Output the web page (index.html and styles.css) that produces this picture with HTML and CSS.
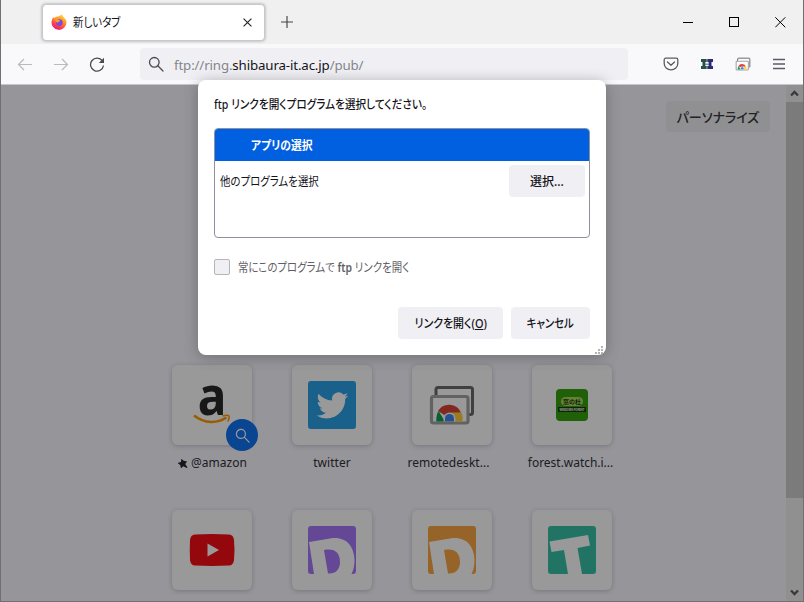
FILE: index.html
```html
<!DOCTYPE html>
<html lang="ja">
<head>
<meta charset="utf-8">
<title>新しいタブ</title>
<link rel="stylesheet" href="styles.css">
</head>
<body>
<svg width="0" height="0" class="defs">
  <defs>
    <symbol id="search" viewBox="0 0 16 16"><circle cx="6.3" cy="6.3" r="4.8" fill="none" stroke="currentColor" stroke-width="1.3"/><path d="M9.8 9.8 15 15" fill="none" stroke="currentColor" stroke-width="1.3" stroke-linecap="round"/></symbol>
    <symbol id="remote" viewBox="0 0 48 48">
      <rect x="8" y="6.500" width="36.500" height="27" rx="2" fill="none" stroke="#6c6c6f" stroke-width="3"/>
      <rect x="3.500" y="15.500" width="36.500" height="26.500" rx="2" fill="#fff" stroke="#a4a4a6" stroke-width="3.200"/>
      <path d="M21 37 10 30A13 13 0 0 1 33 31.500L21 33.500Z" fill="#db4437"/>
      <path d="M8.300 40.500V37A13 13 0 0 1 10.500 30L17 40.500Z" fill="#0f9d58"/>
      <path d="M23 31.500H33.300A13 13 0 0 1 34.500 40.500H24Z" fill="#ffcd40"/>
      <path d="M15.600 40.500V37.500A5.900 5.900 0 0 1 27.400 37.500V40.500Z" fill="#fff"/>
      <path d="M17 40.500V37.500A4.500 4.500 0 0 1 26 37.500V40.500Z" fill="#4285f4"/>
    </symbol>
  </defs>
</svg>
<div class="window">
  <header class="tabbar">
    <div class="tab">
      <svg class="firefox" viewBox="0 0 16 16">
        <defs>
          <linearGradient id="fx" x1=".8" y1="0" x2=".3" y2="1"><stop offset="0" stop-color="#ffe43a"/><stop offset=".45" stop-color="#ff8a2a"/><stop offset=".75" stop-color="#ff3b4f"/><stop offset="1" stop-color="#e31587"/></linearGradient>
        </defs>
        <path d="M2.300 3.200C2.800 3.500 3.100 3.800 3.300 4.200 4 3.300 5.500 2.300 7.500 2.200 9 2 9.600 1.500 10 .2c1.400.8 2 2 2.800 3.200 1.500 1 2.600 2.800 2.700 4.700A7.500 7.500 0 1 1 .7 6.700C.9 5.300 1.500 4.100 2.300 3.200Z" fill="url(#fx)"/>
        <circle cx="8.300" cy="8.600" r="3.400" fill="#8048d8"/>
        <path d="M3.300 5C5 4.600 6.500 5 7.300 6.100 8.500 6.200 9.200 6.500 9.100 7 8.200 7.700 7 7.500 6.900 8.700 5.500 8.600 4.600 7.500 3.300 5Z" fill="#ff9a2a"/>
      </svg>
      <span class="tab-title"><span class="jp">新しいタブ</span></span>
      <svg class="close" viewBox="0 0 8 8"><path d="M.5.5 7.500 7.500M7.500.5.5 7.500" stroke="#222" stroke-width="1"/></svg>
    </div>
    <svg class="plus" viewBox="0 0 12 12"><path d="M6 0V12M0 6H12" stroke="#45444c" stroke-width="1.150"/></svg>
    <div class="winctl">
      <svg viewBox="0 0 11 11"><path d="M0 5.500H10" stroke="#000" shape-rendering="crispEdges"/></svg>
      <svg viewBox="0 0 11 11"><rect x=".5" y=".5" width="9" height="9" fill="none" stroke="#000" shape-rendering="crispEdges"/></svg>
      <svg viewBox="0 0 11 11"><path d="M.3.300 10.300 10.300M10.300.3.3 10.300" stroke="#000"/></svg>
    </div>
  </header>
  <nav class="toolbar">
    <svg class="nav back" viewBox="0 0 16 16"><path d="M15 8.500H1.500M7 3 1.500 8.500 7 14" fill="none" stroke="currentColor" stroke-width="1.200"/></svg>
    <svg class="nav fwd" viewBox="0 0 16 16"><path d="M1 8.500H14.500M9 3 14.500 8.500 9 14" fill="none" stroke="currentColor" stroke-width="1.200"/></svg>
    <svg class="nav reload" viewBox="0 0 16 16"><path d="M13.400 4.900A6.500 6.500 0 1 0 14.500 9.500" fill="none" stroke="currentColor" stroke-width="1.300"/><path d="M15 1.800V7H9.800Z" fill="currentColor"/></svg>
    <div class="urlbar"><svg class="glass"><use href="#search"/></svg><span class="url">ftp://ring.<b>shibaura-it.ac.jp</b>/pub/</span></div>
    <div class="tools">
      <svg viewBox="0 0 16 16"><path d="M2.700 2.200H13.300A1.500 1.500 0 0 1 14.800 3.700V7.500A6.800 6.300 0 0 1 1.200 7.500V3.700A1.500 1.500 0 0 1 2.700 2.200ZM4.500 6 8 9.300 11.500 6" fill="none" stroke="#5b5b66" stroke-width="1.300" stroke-linecap="round" stroke-linejoin="round"/></svg>
      <svg viewBox="0 0 16 16"><path d="M5.500 7.500H10.500V9H5.500Z" fill="#7f93a8"/><path d="M2 3H7.700V6H6.300V10H7.700V13H2V10H3.500V6H2Z" fill="#275243"/><path d="M8.300 3H14V6H12.500V10H14V13H8.300V10H9.700V6H8.300Z" fill="#292b78"/></svg>
      <svg viewBox="0 0 48 48"><use href="#remote"/></svg>
      <svg viewBox="0 0 16 16"><path d="M2 3.500H14M2 8H14M2 12.500H14" stroke="#5b5b66" stroke-width="1.300"/></svg>
    </div>
  </nav>
  <div class="content">
    <main class="page">
      <button class="personalize">パーソナライズ</button>
      <div class="sites">
        <div class="site">
          <div class="tile">
            <svg viewBox="0 0 48 48"><text x="0" y="33.500" class="amazon-a" text-anchor="middle" transform="translate(24) scale(.9 1)">a</text><path d="M6 34.500C17 43 29 42.500 38.500 36.500" fill="none" stroke="#ff9900" stroke-width="2.600"/><path d="M34.500 35C40.500 33.500 43 33.800 39.800 40.500" fill="none" stroke="#ff9900" stroke-width="1.600"/></svg>
            <span class="badge"><svg><use href="#search"/></svg></span>
          </div>
          <div class="label"><svg class="pin" viewBox="0 0 12 12"><path d="M4.800.700 7.200 3.100 11 3.800 9 6.500 11.500 10.300 10.600 11 7 9 4.300 11.200 3.500 7.600.600 5.500 4.300 4.300Z" fill="#26252d"/></svg>@amazon</div>
        </div>
        <div class="site">
          <div class="tile"><svg viewBox="0 0 48 48"><rect width="48" height="48" rx="3" fill="#2aa0e8"/><path transform="translate(8.500 8.500) scale(1.330)" d="M23.950 4.570a10 10 0 0 1-2.820.770 4.960 4.960 0 0 0 2.160-2.720c-.950.550-2 .950-3.130 1.180a4.920 4.920 0 0 0-8.380 4.480C7.690 8.090 4.070 6.130 1.640 3.160a4.820 4.820 0 0 0-.670 2.480c0 1.710.870 3.210 2.190 4.090a4.900 4.900 0 0 1-2.230-.610v.060a4.920 4.920 0 0 0 3.950 4.830 5 5 0 0 1-2.210.080 4.940 4.940 0 0 0 4.600 3.420A9.870 9.870 0 0 1 0 19.540a14 14 0 0 0 7.550 2.210c9.050 0 14-7.500 14-13.980 0-.210 0-.420-.020-.630a9.940 9.940 0 0 0 2.420-2.570Z" fill="#fff"/></svg></div>
          <div class="label">twitter</div>
        </div>
        <div class="site">
          <div class="tile"><svg><use href="#remote"/></svg></div>
          <div class="label clipped">remotedeskt...</div>
        </div>
        <div class="site">
          <div class="tile"><svg viewBox="0 0 48 48"><rect x="8" y="8" width="32" height="32" rx="4" fill="#35a00e"/><rect x="13" y="16" width="22" height="9" rx="4.500" fill="#a8d95a"/><text x="24" y="23.200" class="forest-name" text-anchor="middle">窓の杜</text><rect x="10" y="26" width="28" height="5" fill="#173d0d"/><text x="24" y="29.800" class="forest-sub" text-anchor="middle" textLength="25" lengthAdjust="spacingAndGlyphs">WINDOWS FOREST</text></svg></div>
          <div class="label forest">forest.watch.i...</div>
        </div>
        <div class="site">
          <div class="tile"><svg viewBox="0 0 48 48"><path d="M7 8.400Q24 7.500 41 8.400 45.500 8.700 46 14 47 24 46 34 45.500 39.300 41 39.600 24 40.500 7 39.600 2.500 39.300 2 34 1.500 24 2 14 2.500 8.700 7 8.400Z" fill="#f60d16"/><path d="M19.500 17.500 31 24 19.500 30.500Z" fill="#fff"/></svg></div>
        </div>
        <div class="site">
          <div class="tile"><svg viewBox="0 0 48 48"><rect width="48" height="48" rx="3" fill="#a778fa"/><path fill-rule="evenodd" d="M1 16 22 12.500C38 10 46 20 46.500 34Q46.500 42 43.500 48H6ZM16 24 20 47.500C28 48 32 43 32 36 32 27 27 22 16 24Z" fill="#fff"/></svg></div>
        </div>
        <div class="site">
          <div class="tile"><svg viewBox="0 0 48 48"><rect width="48" height="48" rx="3" fill="#fba645"/><path fill-rule="evenodd" d="M1 16 22 12.500C38 10 46 20 46.500 34Q46.500 42 43.500 48H6ZM16 24 20 47.500C28 48 32 43 32 36 32 27 27 22 16 24Z" fill="#fff"/></svg></div>
        </div>
        <div class="site">
          <div class="tile"><svg viewBox="0 0 48 48"><rect width="48" height="48" rx="3" fill="#38c2a5"/><path d="M1.500 15.500 40 9 42 19.500 29.500 22 34 48H20L16 24 3.500 26Z" fill="#fff"/></svg></div>
        </div>
      </div>
    </main>
    <aside class="scroll">
      <svg viewBox="0 0 17 17"><path d="M5 10.500 8.500 7 12 10.500" fill="none" stroke="#606060" stroke-width="2.300"/></svg>
      <div class="thumb"></div>
      <svg class="down" viewBox="0 0 17 17"><path d="M5 6.500 8.500 10 12 6.500" fill="none" stroke="#606060" stroke-width="2.300"/></svg>
    </aside>
    <div class="shade"></div>
  </div>
  <section class="dialog">
    <h1 class="heading"><span class="jp">ftp リンクを開くプログラムを選択してください。</span></h1>
    <div class="list">
      <div class="selected"><span class="jp">アプリの選択</span></div>
      <div class="other"><span class="jp">他のプログラムを選択</span><button class="btn choose">選択...</button></div>
    </div>
    <label class="remember"><i class="box"></i><span class="jp">常にこのプログラムで <b>ftp</b> リンクを開く</span></label>
    <div class="actions"><button class="btn open"><span class="jp">リンクを開く(<u>O</u>)</span></button><button class="btn cancel"><span class="jp">キャンセル</span></button></div>
    <svg class="grip" viewBox="0 0 8 8"><path d="M6 0h2v2H6zM3 3h2v2H3zM6 3h2v2H6zM0 6h2v2H0zM3 6h2v2H3zM6 6h2v2H6z" fill="#b3b3b3"/></svg>
  </section>
</div>
</body>
</html>
```
FILE: styles.css
```css
* { box-sizing: border-box; }
body { margin: 0; overflow: hidden; font: 12px "Noto Sans", "Noto Sans CJK JP", sans-serif; font-feature-settings: "palt"; color: #15141a; }
svg { display: block; flex: none; }
button { border: 0; font: inherit; color: inherit; padding: 0; white-space: nowrap; }
.defs { position: absolute; }
.jp { display: inline-block; white-space: nowrap; transform: scaleX(.87); transform-origin: left center; }
.window { position: relative; width: 804px; height: 602px; display: flex; flex-direction: column; border: 1px solid #707073; border-top: 0; background: #f9f9fb; }
.tabbar { height: 44px; flex: none; background: #f0f0f0; display: flex; align-items: center; padding-left: 41px; }
.tab { width: 223px; height: 37px; background: #fff; border-radius: 4px; border: 1px solid #c9c9cc; box-shadow: 0 0 3px rgba(0,0,0,.35); display: flex; align-items: center; padding: 0 12px 0 8px; }
.firefox { width: 16px; height: 16px; }
.tab-title { margin-left: 6px; flex: 1; }
.close { width: 9px; height: 9px; }
.plus { width: 12px; height: 12px; margin-left: 16px; }
.winctl { display: flex; gap: 35px; margin-left: auto; margin-right: 17px; }
.winctl svg { width: 11px; height: 11px; }
.toolbar { height: 41px; flex: none; display: flex; align-items: center; border-bottom: 1px solid #c7c7cb; background: #f9f9fb; color: #4b4a53; }
.nav { width: 16px; height: 16px; }
.back { margin-left: 16px; color: #b9b9be; }
.fwd { margin-left: 20px; color: #b9b9be; }
.reload { margin-left: 20px; }
.urlbar { width: 488px; height: 32px; margin-left: 35px; border-radius: 4px; background: #f0f0f4; display: flex; align-items: center; padding-left: 8px; }
.glass { width: 16px; height: 16px; }
.url { margin-left: 10px; padding-top: 2px; font-size: 13.3px; color: #85858c; letter-spacing: -.14px; white-space: nowrap; }
.url b { font-weight: 400; color: #15141a; }
.tools { display: flex; gap: 20px; margin-left: auto; margin-right: 16px; }
.tools svg { width: 16px; height: 16px; }
.content { position: relative; flex: 1; display: flex; min-height: 0; }
.page { flex: 1; display: flex; flex-direction: column; overflow: hidden; background: #faf9ff; }
.personalize { align-self: flex-end; flex: none; width: 104px; height: 31px; margin: 16px 16px 0 0; border-radius: 4px; background: #f0f0f4; font-size: 13px; font-weight: 500; color: #3a3940; }
.sites { display: grid; grid-template-columns: repeat(4, 80px); column-gap: 40px; grid-auto-rows: 145px; margin: 233px 0 0 171px; }
.site { display: flex; flex-direction: column; align-items: center; }
.tile { position: relative; width: 80px; height: 80px; flex: none; border-radius: 6px; background: #fff; display: flex; align-items: center; justify-content: center; box-shadow: 0 1px 5px rgba(58,57,90,.28); }
.tile > svg { width: 48px; height: 48px; overflow: visible; }
.amazon-a { font: 700 53px/1 "Noto Sans", sans-serif; fill: #292929; }
.forest-name { font: 700 6px/1 "Noto Sans CJK JP", sans-serif; fill: #173d0d; }
.forest-sub { font: 700 3px/1 "Liberation Sans", sans-serif; fill: #fff; }
.badge { position: absolute; left: 54px; top: 54px; width: 32px; height: 32px; border-radius: 50%; background: #1273f4; color: #fff; display: flex; align-items: center; justify-content: center; }
.badge svg { width: 15px; height: 15px; }
.label { margin-top: 9px; height: 18px; line-height: 18px; font-size: 12px; letter-spacing: .05px; color: #33323a; white-space: nowrap; display: flex; align-items: center; }
.clipped { margin-right: 7px; }
.forest { margin-right: 3px; letter-spacing: -.03px; }
.pin { width: 11px; height: 11px; margin-right: 3px; }
.scroll { width: 17px; background: #f0f0f0; display: flex; flex-direction: column; }
.scroll svg { width: 17px; height: 17px; }
.thumb { height: 396px; background: #cdcdcd; }
.scroll .down { margin-top: auto; }
.shade { position: absolute; inset: 0; background: rgba(0,0,0,.4); }
.dialog { position: absolute; left: 197px; top: 80px; width: 408px; height: 275px; border-radius: 8px; background: #fff; box-shadow: 0 2px 14px rgba(58,57,68,.4); padding: 16px; display: flex; flex-direction: column; }
.heading { margin: 0; height: 32px; line-height: 18px; font-size: 12px; font-weight: 500; }
.heading .jp { transform: scaleX(.885); }
.list { height: 110px; flex: none; border: 1px solid #8f8f9d; border-radius: 4px; overflow: hidden; }
.selected { height: 32px; background: #0060df; color: #fff; font-weight: 600; padding-left: 36px; line-height: 34px; }
.selected .jp { transform: scaleX(.9); }
.other { height: 40px; display: flex; align-items: center; justify-content: space-between; padding: 0 4px 0 5px; }
.btn { height: 32px; border-radius: 4px; background: #f0f0f4; font-weight: 500; font-size: 12px; }
.btn .jp { transform-origin: center; }
.open .jp { transform: scaleX(.91); }
.choose { width: 76px; }
.remember { margin-top: 20px; height: 18px; display: flex; align-items: center; color: #5f5e66; }
.box { width: 16px; height: 16px; border: 1px solid #b4b4bb; border-radius: 2px; background: #f0f0f4; margin-right: 8px; }
.remember b { font-weight: 600; }
.actions { display: flex; justify-content: flex-end; gap: 8px; margin-top: 31px; }
.open { width: 105px; }
.cancel { width: 79px; }
.grip { position: absolute; right: 3px; bottom: 1px; width: 8px; height: 8px; }
```
